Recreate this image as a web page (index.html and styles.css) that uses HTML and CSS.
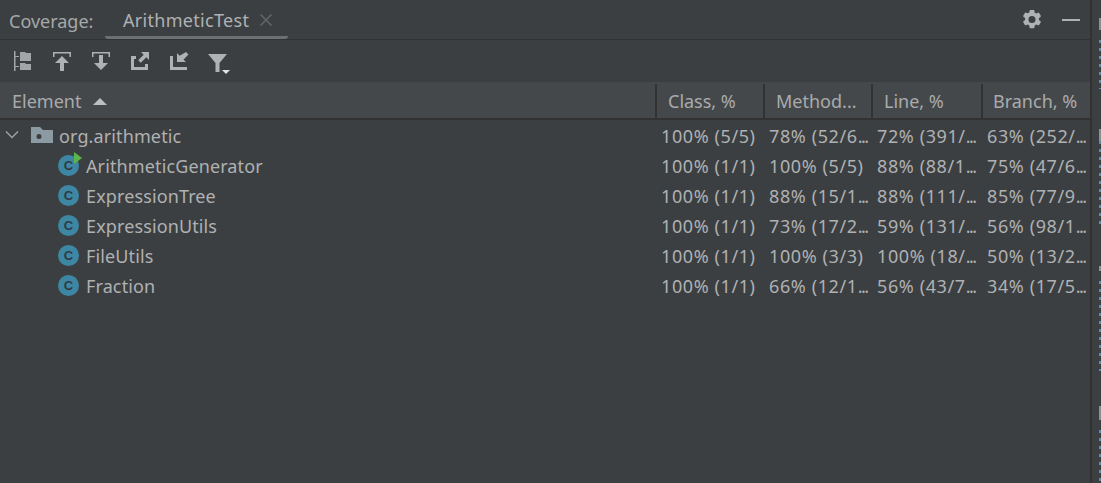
FILE: index.html
```html
<!DOCTYPE html>
<html lang="en">
<head>
    <meta charset="UTF-8">
    <title>Coverage</title>
    <link rel="stylesheet" href="styles.css">
</head>
<body>
    <div class="panel">
        <!-- tab bar -->
        <div class="tab-bar">
            <span class="tab-label">Coverage:</span>
            <div class="tab">
                <span>ArithmeticTest</span>
                <svg class="tab-close" width="12" height="12" viewBox="0 0 12 12"><path d="M.5.5l11 11M11.500.5l-11 11" stroke="#63676a" stroke-width="1.500" fill="none"/></svg>
            </div>
            <div class="tab-actions">
                <svg width="22" height="22" viewBox="0 0 20 20"><path fill="#afb1b3" fill-rule="evenodd" d="M8 .8h4l.5 2.500 1.300.7 2.400-.8 2 3.400-1.900 1.700v1.600l1.900 1.700-2 3.400-2.400-.8-1.300.7-.5 2.500H8l-.5-2.500-1.300-.7-2.400.8-2-3.400 1.900-1.700V8.200L1.800 6.500l2-3.400 2.400.8 1.300-.7zM10 6.300a3.200 3.200 0 1 0 0 6.400 3.200 3.200 0 0 0 0-6.400z"/></svg>
                <span class="minimize"></span>
            </div>
        </div>

        <!-- toolbar -->
        <div class="toolbar">
            <svg width="20" height="20" viewBox="0 0 20 20"><path fill="#a3a5a7" d="M1 0h1.500v20H1zM2.500 5H6v1H2.500zM2.500 15H6v1H2.500zM7 1h5l1 1h5v8H7zM7 12h5l1 1h5v6H7z"/></svg>
            <svg width="20" height="20" viewBox="0 0 20 20"><path fill="#afb1b3" d="M1 1h18v5h-1.500V2.500h-15V6H1zM10 5l7 7h-5v8H8v-8H3z"/></svg>
            <svg width="20" height="20" viewBox="0 0 20 20"><path fill="#afb1b3" d="M1 1h18v5h-1.500V2.500h-15V6H1zM8 4h4v8h5l-7 7-7-7h5z"/></svg>
            <svg width="20" height="20" viewBox="0 0 20 20"><path fill="#afb1b3" d="M1 5h5v3H4v8h11v-3h3v6H1zM11 1h8v8l-2.700-2.700-5.500 5.500-2.600-2.600 5.500-5.500z"/></svg>
            <svg width="20" height="20" viewBox="0 0 20 20"><path fill="#afb1b3" d="M1 5h3v11h14v3H1zM17 1l2.500 2.500-5 5L17 11H8V2l2.700 2.700z"/></svg>
            <svg class="filter-icon" width="24" height="24" viewBox="0 0 24 24"><path fill="#afb1b3" d="M1 2h19l-7.500 9v9h-4v-9z"/><path fill="#e0e1e2" d="M15 18h8l-4 4z"/></svg>
        </div>

        <!-- table -->
        <div class="table-head table-grid">
            <div class="head-cell head-first">Element <span class="sort-arrow"></span></div>
            <div class="head-cell">Class, %</div>
            <div class="head-cell">Method...</div>
            <div class="head-cell">Line, %</div>
            <div class="head-cell head-last">Branch, %</div>
        </div>

        <div class="table-row table-grid">
            <div class="tree-cell">
                <svg class="chevron" width="14" height="10" viewBox="0 0 14 10"><path d="M1 1.500l6 6 6-6" stroke="#9da0a2" stroke-width="1.500" fill="none"/></svg>
                <svg class="folder" width="22" height="16" viewBox="0 0 22 16"><path fill="#8c9aa4" fill-rule="evenodd" d="M0 0h9l3 3h10v13H0zM8 7a2.500 2.500 0 1 0 0 5 2.500 2.500 0 0 0 0-5z"/></svg>
                <span class="tree-name">org.arithmetic</span>
            </div>
            <div class="cell">100% (5/5)</div>
            <div class="cell">78% (52/6<span class="dots">...</span></div>
            <div class="cell">72% (391/<span class="dots">...</span></div>
            <div class="cell">63% (252/<span class="dots">...</span></div>
        </div>
        <div class="table-row table-grid">
            <div class="tree-cell class-cell">
                <span class="class-icon running">C</span>
                <span class="tree-name">ArithmeticGenerator</span>
            </div>
            <div class="cell">100% (1/1)</div>
            <div class="cell">100% (5/5)</div>
            <div class="cell">88% (88/1<span class="dots">...</span></div>
            <div class="cell">75% (47/6<span class="dots">...</span></div>
        </div>
        <div class="table-row table-grid">
            <div class="tree-cell class-cell">
                <span class="class-icon">C</span>
                <span class="tree-name">ExpressionTree</span>
            </div>
            <div class="cell">100% (1/1)</div>
            <div class="cell">88% (15/1<span class="dots">...</span></div>
            <div class="cell">88% (111/<span class="dots">...</span></div>
            <div class="cell">85% (77/9<span class="dots">...</span></div>
        </div>
        <div class="table-row table-grid">
            <div class="tree-cell class-cell">
                <span class="class-icon">C</span>
                <span class="tree-name">ExpressionUtils</span>
            </div>
            <div class="cell">100% (1/1)</div>
            <div class="cell">73% (17/2<span class="dots">...</span></div>
            <div class="cell">59% (131/<span class="dots">...</span></div>
            <div class="cell">56% (98/1<span class="dots">...</span></div>
        </div>
        <div class="table-row table-grid">
            <div class="tree-cell class-cell">
                <span class="class-icon">C</span>
                <span class="tree-name">FileUtils</span>
            </div>
            <div class="cell">100% (1/1)</div>
            <div class="cell">100% (3/3)</div>
            <div class="cell">100% (18/<span class="dots">...</span></div>
            <div class="cell">50% (13/2<span class="dots">...</span></div>
        </div>
        <div class="table-row table-grid">
            <div class="tree-cell class-cell">
                <span class="class-icon">C</span>
                <span class="tree-name">Fraction</span>
            </div>
            <div class="cell">100% (1/1)</div>
            <div class="cell">66% (12/1<span class="dots">...</span></div>
            <div class="cell">56% (43/7<span class="dots">...</span></div>
            <div class="cell">34% (17/5<span class="dots">...</span></div>
        </div>
    </div>
    <div class="side-strip">
        <span class="strip-mark grey grey-a"></span>
        <span class="strip-mark blue blue-a"></span>
        <span class="strip-mark grey grey-b"></span>
        <span class="strip-mark blue blue-b"></span>
        <span class="strip-mark grey grey-c"></span>
        <span class="strip-mark blue blue-c"></span>
        <span class="strip-mark grey grey-d"></span>
        <span class="strip-mark blue blue-d"></span>
    </div>
</body>
</html>
```

FILE: styles.css
```css
html, body {
    height: 100%;
}

body {
    display: flex;
    margin: 0;
    overflow: hidden;
    background-color: #3c3f41;
    color: #afb1b3;
    font-family: "Noto Sans", Arial, sans-serif;
    font-size: 18px;
}

.panel {
    width: 1090px;
    flex-shrink: 0;
}

/* cut off edge of the next window, only scraps of it show */
.side-strip {
    display: flex;
    flex-direction: column;
    align-items: flex-end;
    width: 11px;
    border-left: 2px solid #323232;
    box-sizing: border-box;
}

.strip-mark {
    width: 2px;
}

.grey {
    background: #8d8f91;
}

.blue {
    background: repeating-linear-gradient(#5f86ad 0 3px, transparent 3px 8px);
}

.grey-a { height: 12px; margin-top: 18px; }
.blue-a { height: 50px; margin-top: 10px; }
.grey-b { height: 12px; margin-top: 40px; }
.blue-b { height: 85px; margin-top: 0; }
.grey-c { height: 6px; margin-top: 40px; }
.blue-c { height: 90px; margin-top: 10px; }
.grey-d { height: 15px; margin-top: 35px; }
.blue-d { height: 53px; margin-top: 10px; }

/* tab bar */
.tab-bar {
    display: flex;
    align-items: center;
    height: 39px;
    padding-left: 9px;
    border-bottom: 1px solid #323232;
}

.tab-label {
    width: 86px;
    padding-top: 2px;
    color: #a5a8aa;
}

.tab {
    display: flex;
    align-items: center;
    gap: 11px;
    width: 183px;
    height: 39px;
    margin-left: 10px;
    padding: 4px 0 0 18px;
    box-sizing: border-box;
    border-bottom: 3px solid #6c7073;
    border-radius: 0 0 3px 3px;
    letter-spacing: 0.3px;
}

.tab-actions {
    display: flex;
    align-items: center;
    gap: 19px;
    margin-left: auto;
    padding: 1px 10px 0 0;
}

.minimize {
    width: 18px;
    height: 2px;
    background: #afb1b3;
}

/* toolbar */
.toolbar {
    display: flex;
    align-items: center;
    gap: 19px;
    height: 42px;
    padding-left: 13px;
}

.filter-icon {
    margin-left: -1px;
    margin-top: 5px;
}

/* table */
.table-grid {
    display: grid;
    grid-template-columns: 655px 108px 108px 110px 109px;
}

.table-head {
    height: 36px;
    background: #45484a;
    border-bottom: 2px solid #323232;
}

.head-cell {
    display: flex;
    align-items: center;
    padding-left: 11px;
    margin: 2px 0 0;
    border-left: 2px solid #323232;
    color: #a9abad;
}

.head-first {
    gap: 12px;
    padding-left: 12px;
    border-left: none;
}

.head-last {
    padding-left: 10px;
}

.sort-arrow {
    width: 0;
    height: 0;
    border-left: 7px solid transparent;
    border-right: 7px solid transparent;
    border-bottom: 7px solid #bcbec0;
}

.table-row {
    align-items: center;
    height: 30px;
}

.tree-cell {
    display: flex;
    align-items: center;
    padding-left: 5px;
}

.tree-name {
    padding-top: 2px;
    letter-spacing: 0.12px;
}

.chevron {
    margin-right: 12px;
}

.folder {
    margin-right: 6px;
}

.class-cell {
    padding-left: 58px;
    gap: 7px;
}

.class-icon {
    position: relative;
    width: 21px;
    height: 21px;
    border-radius: 50%;
    background: #3d87a4;
    color: #2f3b42;
    font-family: "Liberation Sans", Arial, sans-serif;
    font-size: 13px;
    font-weight: 700;
    line-height: 21px;
    text-align: center;
}

.running::after {
    content: "";
    position: absolute;
    top: -3px;
    right: -3px;
    border-left: 8px solid #5cb548;
    border-top: 6px solid transparent;
    border-bottom: 6px solid transparent;
}

.cell {
    padding: 2px 0 0 6px;
    letter-spacing: 0.6px;
    white-space: nowrap;
}

.dots {
    letter-spacing: -1.5px;
}
```
